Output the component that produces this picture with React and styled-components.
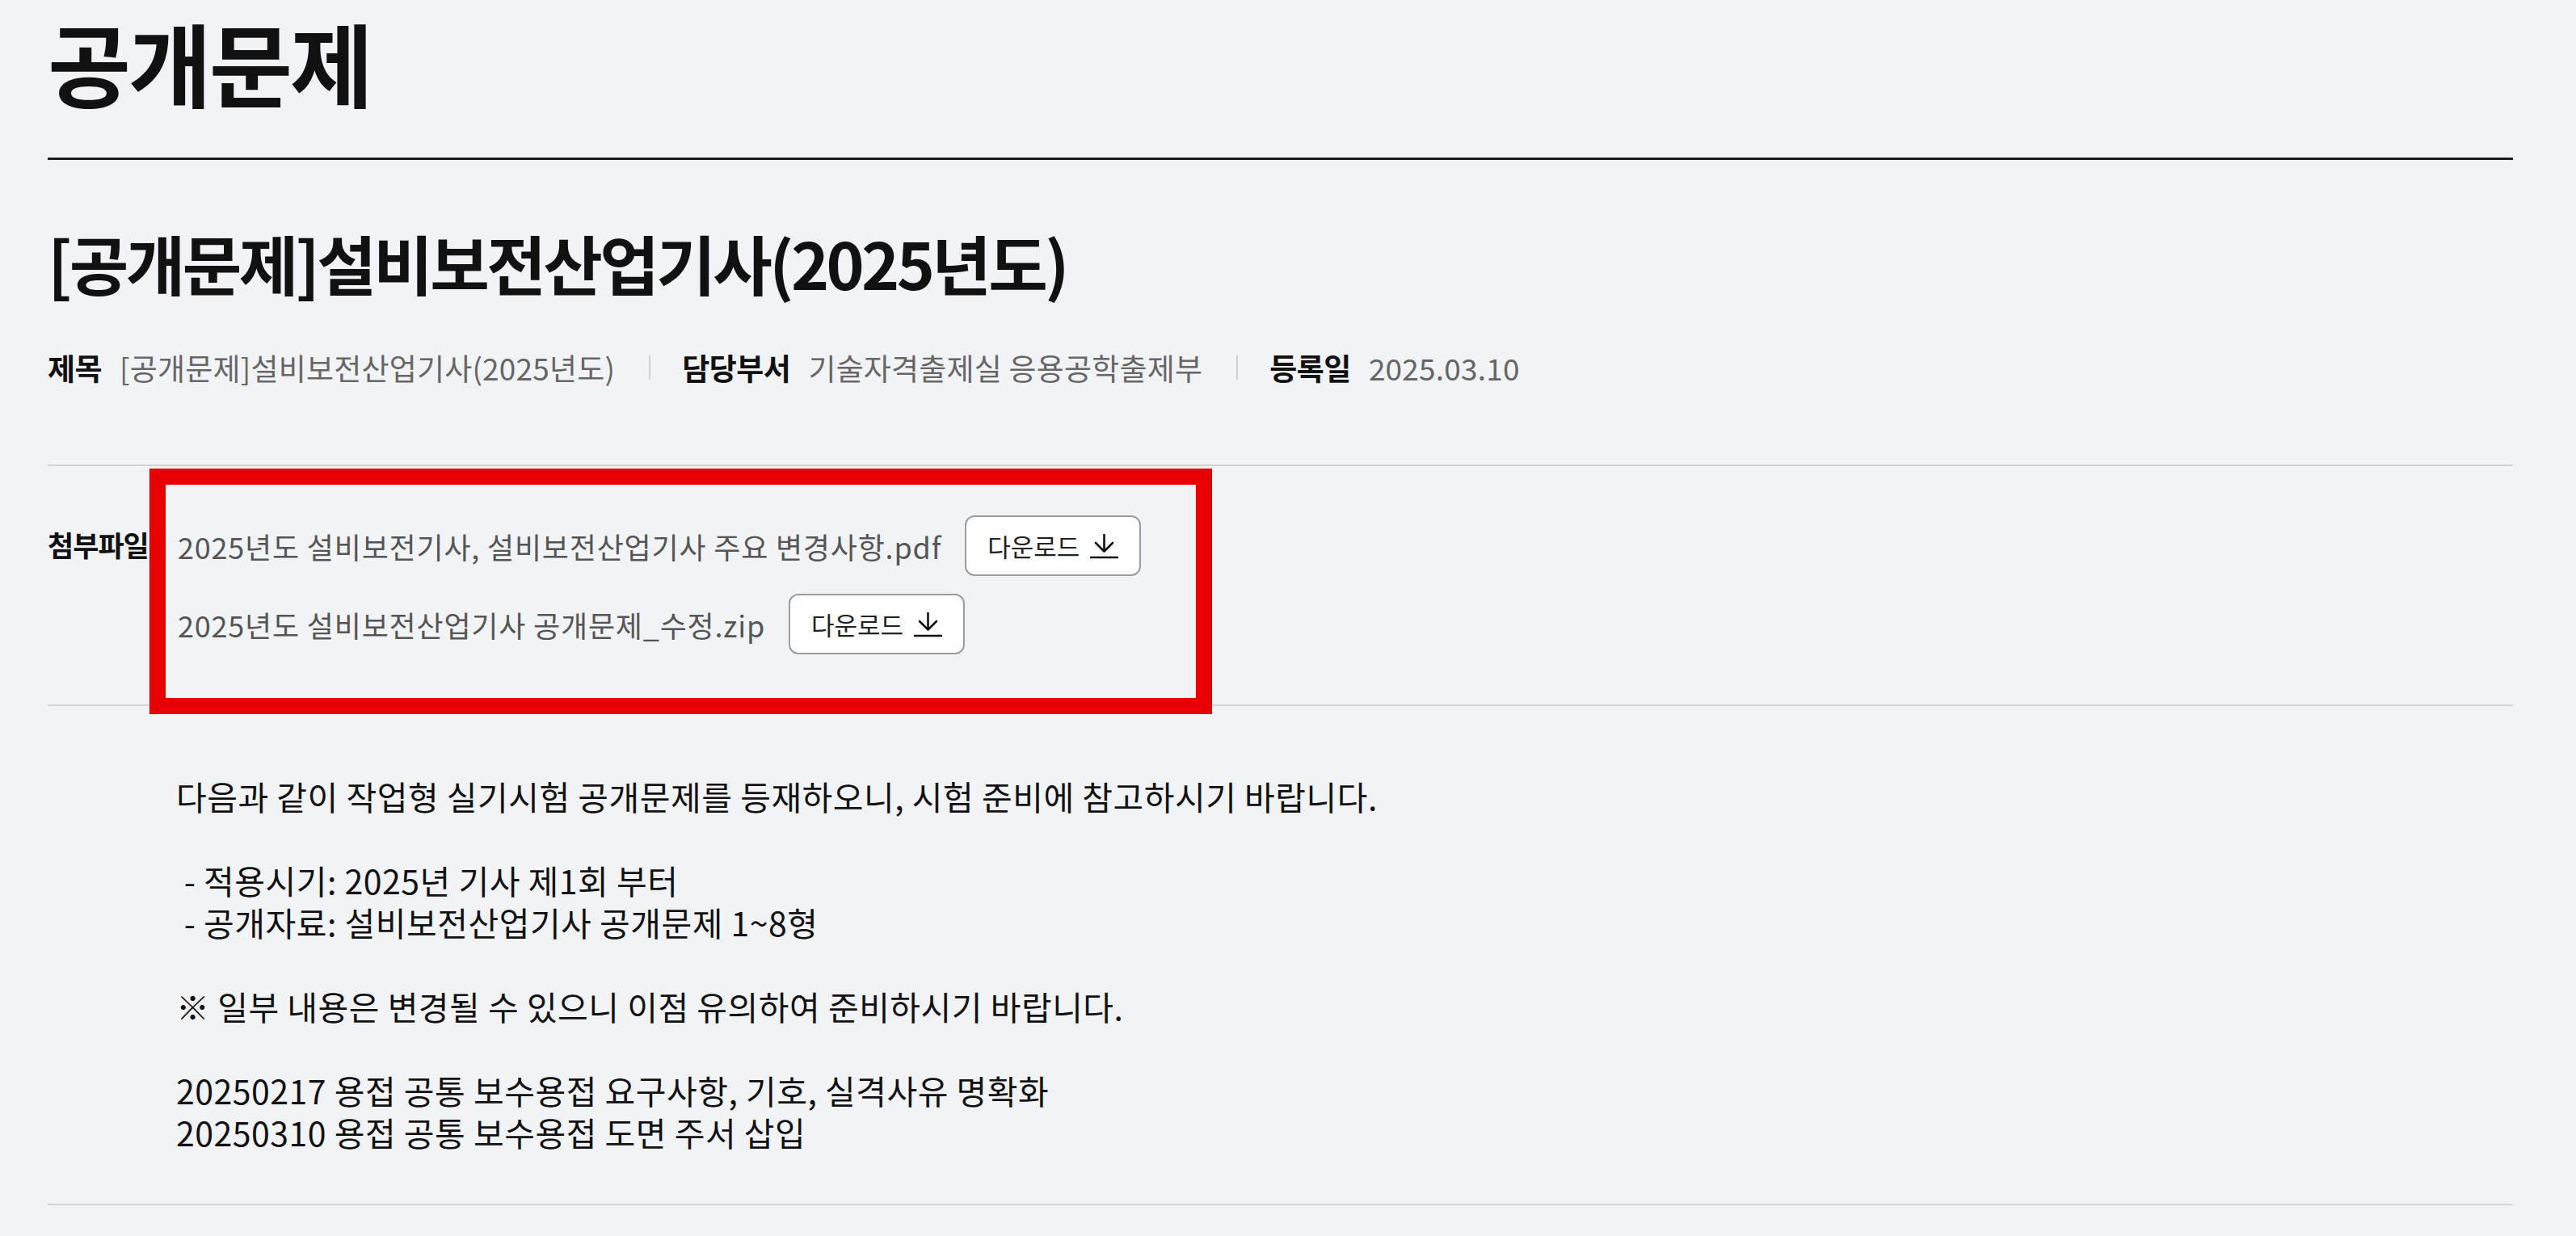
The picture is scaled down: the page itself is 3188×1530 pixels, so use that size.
import React from 'react'
import styled, { createGlobalStyle } from 'styled-components'

const GlobalStyle = createGlobalStyle`
  body {
    margin: 0;
    background: #f2f3f7;
    font-family: "Noto Sans CJK KR", "Noto Sans", sans-serif;
    color: #111;
  }
`

const Page = styled.div`
  width: 3051px;
  margin-left: 59px;
`

const PageHeader = styled.header`
  padding: 20px 0 63px;
  border-bottom: 3px solid #1e1e1e;
`

const PageTitle = styled.h1`
  margin: 0;
  font-size: 112px;
  line-height: 112px;
  font-weight: 700;
  letter-spacing: -3px;
  color: #111;
`

const Summary = styled.section`
  padding: 82px 0 98px;
  border-bottom: 2px solid #d3d4d8;
`

const Heading = styled.h2`
  margin: 0 0 64px;
  font-size: 80px;
  line-height: 89px;
  font-weight: 700;
  letter-spacing: -3.6px;
  color: #111;
`

const MetaList = styled.dl`
  display: flex;
  align-items: center;
  margin: 0;
  font-size: 37px;
  line-height: 44px;
`

const MetaItem = styled.div`
  display: flex;
  align-items: center;
  gap: 22px;
`

const MetaLabel = styled.dt`
  font-weight: 700;
  color: #111;
  letter-spacing: -0.5px;
`

const MetaValue = styled.dd`
  margin: 0;
  color: #666;
  letter-spacing: 0.2px;
`

const MetaDivider = styled.span`
  width: 2px;
  height: 30px;
  margin: 0 39px 0 42px;
  background: #d0d0d0;
`

const Attach = styled.section`
  position: relative;
  display: flex;
  align-items: flex-start;
  padding: 61px 0 62px;
  border-bottom: 2px solid #d3d4d8;
`

const AttachLabel = styled.div`
  width: 161px;
  flex-shrink: 0;
  font-size: 35px;
  line-height: 72px;
  font-weight: 700;
  letter-spacing: -1px;
  color: #111;
`

const FileList = styled.ul`
  display: flex;
  flex-direction: column;
  gap: 22px;
  margin: 0;
  padding: 0;
  list-style: none;
`

const FileRow = styled.li`
  display: flex;
  align-items: center;
  gap: 29px;
`

const FileName = styled.span`
  font-size: 36px;
  color: #555;
  letter-spacing: 0.8px;
`

const DownloadButton = styled.button`
  display: flex;
  align-items: center;
  gap: 13px;
  height: 75px;
  padding: 0 26px;
  border: 2px solid #9c9c9c;
  border-radius: 12px;
  background: #fff;
  font-family: inherit;
  font-size: 31px;
  color: #222;
  cursor: pointer;
`

const Highlight = styled.div`
  position: absolute;
  left: 126px;
  top: 3px;
  width: 1315px;
  height: 304px;
  box-sizing: border-box;
  border: 20px solid #e60000;
  pointer-events: none;
`

const Body = styled.section`
  padding: 85px 0 63px 159px;
  border-bottom: 2px solid #d3d4d8;
  font-size: 41px;
  line-height: 52px;
  letter-spacing: 0.5px;
  color: #111;
  white-space: pre-wrap;
`

const Line = styled.p`
  margin: 0;
  min-height: 52px;
`

const DownloadIcon = () => (
  <svg width="35" height="32" viewBox="0 0 35 32" fill="none" stroke="#111" strokeWidth="2.6" strokeLinecap="round" strokeLinejoin="round">
    <path d="M17.5 2v20" />
    <path d="M7 12l10.5 10.5L28 12" />
    <path d="M1 30h33" />
  </svg>
)

const files = [
  '2025년도 설비보전기사, 설비보전산업기사 주요 변경사항.pdf',
  '2025년도 설비보전산업기사 공개문제_수정.zip',
]

const bodyLines = [
  '다음과 같이 작업형 실기시험 공개문제를 등재하오니, 시험 준비에 참고하시기 바랍니다.',
  '',
  ' - 적용시기: 2025년 기사 제1회 부터',
  ' - 공개자료: 설비보전산업기사 공개문제 1~8형',
  '',
  '※ 일부 내용은 변경될 수 있으니 이점 유의하여 준비하시기 바랍니다.',
  '',
  '20250217 용접 공통 보수용접 요구사항, 기호, 실격사유 명확화',
  '20250310 용접 공통 보수용접 도면 주서 삽입',
]

const App = () => {
  return (
    <>
      <GlobalStyle />
      <Page>
        <PageHeader>
          <PageTitle>공개문제</PageTitle>
        </PageHeader>

        <Summary>
          <Heading>[공개문제]설비보전산업기사(2025년도)</Heading>
          <MetaList>
            <MetaItem>
              <MetaLabel>제목</MetaLabel>
              <MetaValue>[공개문제]설비보전산업기사(2025년도)</MetaValue>
            </MetaItem>
            <MetaDivider />
            <MetaItem>
              <MetaLabel>담당부서</MetaLabel>
              <MetaValue>기술자격출제실 응용공학출제부</MetaValue>
            </MetaItem>
            <MetaDivider />
            <MetaItem>
              <MetaLabel>등록일</MetaLabel>
              <MetaValue>2025.03.10</MetaValue>
            </MetaItem>
          </MetaList>
        </Summary>

        <Attach>
          <AttachLabel>첨부파일</AttachLabel>
          <FileList>
            {files.map(name => (
              <FileRow key={name}>
                <FileName>{name}</FileName>
                <DownloadButton type="button">
                  다운로드
                  <DownloadIcon />
                </DownloadButton>
              </FileRow>
            ))}
          </FileList>
          <Highlight />
        </Attach>

        <Body>
          {bodyLines.map((text, i) => (
            <Line key={i}>{text}</Line>
          ))}
        </Body>
      </Page>
    </>
  )
}

export default App
